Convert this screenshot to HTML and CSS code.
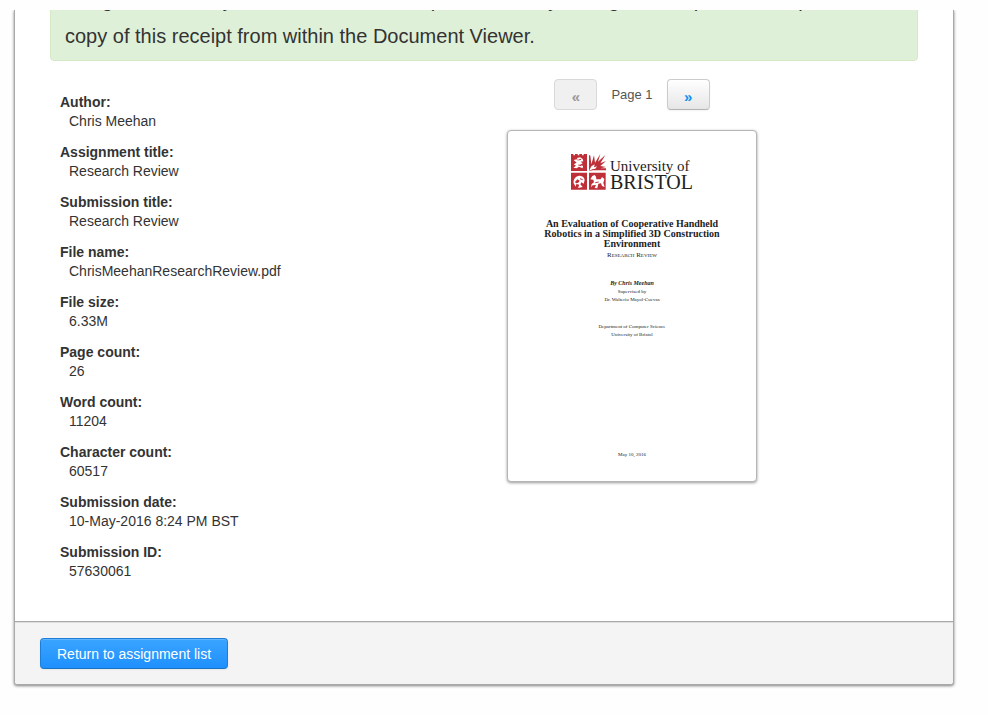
FILE: index.html
```html
<!DOCTYPE html>
<html lang="en">
<head>
<meta charset="utf-8">
<title>Digital Receipt</title>
<link rel="stylesheet" href="styles.css">
</head>
<body>
<main class="panel">
  <div class="content">
    <p class="alert">Congratulations - your submission is complete! This is your digital receipt. You can print a copy of this receipt from within the Document Viewer.</p>
    <div class="columns">
      <dl class="details">
        <div><dt>Author:</dt><dd>Chris Meehan</dd></div>
        <div><dt>Assignment title:</dt><dd>Research Review</dd></div>
        <div><dt>Submission title:</dt><dd>Research Review</dd></div>
        <div><dt>File name:</dt><dd>ChrisMeehanResearchReview.pdf</dd></div>
        <div><dt>File size:</dt><dd>6.33M</dd></div>
        <div><dt>Page count:</dt><dd>26</dd></div>
        <div><dt>Word count:</dt><dd>11204</dd></div>
        <div><dt>Character count:</dt><dd>60517</dd></div>
        <div><dt>Submission date:</dt><dd>10-May-2016 8:24 PM BST</dd></div>
        <div><dt>Submission ID:</dt><dd>57630061</dd></div>
      </dl>
      <section class="preview">
        <nav class="pager">
          <button class="btn" type="button" disabled>«</button>
          <span>Page 1</span>
          <button class="btn" type="button">»</button>
        </nav>
        <article class="sheet">
          <div class="logo">
            <svg class="crest" viewBox="0 0 105 108" aria-hidden="true">
              <g fill="#bf2f38">
                <path d="M0 0h7v4h5V0h8v4h5V0h8v4h5V0h10v51H0z"/>
                <path d="M54 51V3l4 2 3 26L69 4l3 22L88 0l-7 23 22-20-15 25 17-7-17 15 17 3-16 4h16v6H66z"/>
                <path d="M0 56h48v51H0zM54 56h50v51H54z"/>
              </g>
              <g fill="#fff">
                <path d="M8 18l9-2 3 5-2-9 9-2 8 5 2 7-8 1 6 5-9 5 10 2-1 8-11-5-7 5-10-2 8-6-7-4 9-5z"/>
                <path d="M54 51l7-14 10-6-2 9 9-3-5 7-9 2z"/>
                <path d="M8 88c-2-12 6-22 17-23 9-1 15 6 16 13l-3 11-7-4-3 6 7 8-14 3 4-10-9-2-2 8z"/>
                <path d="M58 76l6-10 7-3 4 5 1 8 13 0 4-7 7 6-3 12 4 12-8-3-3-8-8 1-3 14-8-1 4-9-10 1-5 6 2-10 7-5-2-8z"/>
              </g>
              <path d="M12 84l7-8 7 4-4 6-7 2z" fill="#bf2f38"/>
              <path d="M22 18l8-2M22 33l9 2M27 74l8 3M73 86l10-2" fill="none" stroke="#bf2f38" stroke-width="3"/>
            </svg>
            <div class="wordmark"><span>University of</span><span class="bristol">BRISTOL</span></div>
          </div>
          <h1>An Evaluation of Cooperative Handheld<br>Robotics in a Simplified 3D Construction<br>Environment</h1>
          <p class="kind">Research Review</p>
          <p class="by">By Chris Meehan</p>
          <p>Supervised by</p>
          <p>Dr. Walterio Mayol-Cuevas</p>
          <p class="dept">Department of Computer Science</p>
          <p>University of Bristol</p>
          <p class="date">May 10, 2016</p>
        </article>
      </section>
    </div>
  </div>
  <footer class="actions">
    <button class="btn primary" type="button">Return to assignment list</button>
  </footer>
</main>
</body>
</html>
```
FILE: styles.css
```css
* {
  box-sizing: border-box;
}

body {
  margin: 0;
  padding: 10px 34px 30px 14px;
  background: #fefefe;
  color: #333;
  font: 14px/19px "Liberation Sans", Arial, sans-serif;
  overflow: hidden;
}

p, h1, dl, dd {
  margin: 0;
}

/* the upper edge of the panel is scrolled out of view */
.panel {
  border: 1px solid #a9a9a9;
  border-top: 0;
  border-radius: 0 0 3px 3px;
  background: #fff;
  box-shadow: 0 1px 3px rgba(0, 0, 0, 0.5);
  clip-path: inset(0 -6px -6px -6px);
}

.content {
  padding: 0 35px 40px;
  overflow: hidden;
}

.alert {
  margin-top: -35px;
  padding: 6px 35px 6px 14px;
  border: 1px solid #d6e9c6;
  border-radius: 4px;
  background: #dff0d8;
  font-size: 20px;
  line-height: 36px;
}

.columns {
  display: grid;
  grid-template-columns: 1fr 1fr;
}

.details {
  display: grid;
  gap: 12px;
  align-content: start;
  padding: 32px 10px 0;
}

dt {
  font-weight: bold;
}

dd {
  padding-left: 9px;
}

.preview {
  width: 273px;
  padding: 18px 0 0 23px;
}

.pager {
  display: flex;
  justify-content: center;
  align-items: center;
  gap: 14px;
  margin-bottom: 20px;
  color: #555;
  font-size: 13px;
}

.btn {
  width: 43px;
  height: 31px;
  padding: 4px 0 0;
  border: 1px solid #ccc;
  border-bottom-color: #b3b3b3;
  border-radius: 4px;
  background: linear-gradient(#fff, #e6e6e6);
  box-shadow: 0 1px 2px rgba(0, 0, 0, 0.05);
  color: #0f8ff5;
  font: bold 15px/20px "Liberation Sans", Arial, sans-serif;
}

.btn:disabled {
  border-color: #d9d9d9;
  background: #f0f0f0;
  box-shadow: none;
  color: #999;
}

.sheet {
  height: 352px;
  padding-top: 23px;
  border: 1px solid #b5b5b5;
  border-radius: 4px;
  background: #fff;
  box-shadow: 0 1px 3px rgba(0, 0, 0, 0.4);
  color: #222;
  font: 5px/8px "Liberation Serif", "Times New Roman", serif;
  text-align: center;
}

.logo {
  display: flex;
  justify-content: center;
  gap: 4px;
  margin-bottom: 29px;
}

.crest {
  width: 35px;
  height: 36px;
}

.wordmark {
  display: flex;
  flex-direction: column;
  padding-top: 4px;
  font-size: 15px;
  line-height: 16px;
  text-align: left;
}

.bristol {
  font-size: 20px;
}

h1 {
  font-size: 10px;
  line-height: 10px;
}

.kind {
  margin: 2px 0 20px;
  font-size: 7px;
  font-variant: small-caps;
}

.by {
  margin-bottom: 1px;
  font-size: 6px;
  font-style: italic;
  font-weight: bold;
}

.dept {
  margin-top: 19px;
}

.date {
  margin-top: 112px;
}

.actions {
  padding: 16px 25px 15px;
  border-top: 1px solid #a9a9a9;
  border-radius: 0 0 3px 3px;
  background: #f4f4f4;
  box-shadow: inset 0 1px 0 #ddd;
}

.primary {
  display: block;
  width: auto;
  padding: 0 16px;
  border-color: #1c7ed6;
  border-bottom-color: #1a72c2;
  background: linear-gradient(#3aa4ff, #1e90ff);
  box-shadow: inset 0 1px 0 rgba(255, 255, 255, 0.2), 0 1px 2px rgba(0, 0, 0, 0.05);
  color: #fff;
  font-weight: normal;
  font-size: 14px;
}
```
